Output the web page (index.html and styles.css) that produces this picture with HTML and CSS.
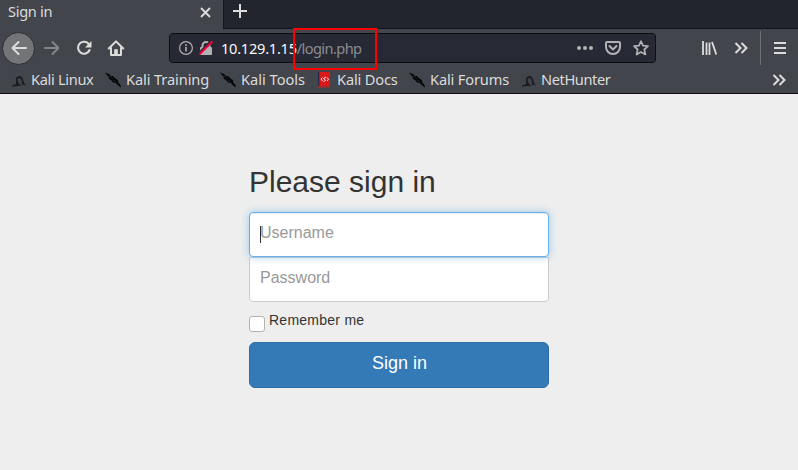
FILE: index.html
```html
<!DOCTYPE html>
<html lang="en">
<head>
<meta charset="utf-8">
<title>Sign in</title>
<link rel="stylesheet" href="styles.css">
</head>
<body>
<svg class="defs" width="0" height="0" aria-hidden="true">
  <symbol id="dragon" viewBox="0 0 16 16"><path d="M2 13.500 6 12C6.500 9 5 7 7 5C9 3 12 4 13 7L14 11 16 13.500 12 12.500 11.500 8C11 6 8 5.500 7.500 8L9 12 12 13.500 8 14 2 14.500Z" fill="#1b1d20"/></symbol>
  <symbol id="blade" viewBox="0 0 16 16"><path d="M0 0.500 4 2 6 4 8 4 11 7 13 8 13 10 15.500 13 16 15.500 12.500 13 11 11 8 10.500 6 8 4 7 3.500 5Z" fill="#050607"/><path d="M3 4 6 5 8 7M8 8 11 10" stroke="#34373c" stroke-width=".6" fill="none"/></symbol>
  <symbol id="chevrons" viewBox="0 0 14 12"><path d="M1.500 1 6.500 6 1.500 11M7.500 1 12.500 6 7.500 11" fill="none" stroke="currentColor" stroke-width="2"/></symbol>
</svg>
<header class="chrome">
  <div class="tabs">
    <div class="tab"><span>Sign in</span>
      <svg class="close" width="11" height="11" viewBox="0 0 11 11"><path d="m1 1 9 9M10 1 1 10" stroke="currentColor" stroke-width="1.800"/></svg>
    </div>
    <svg class="plus" width="14" height="14" viewBox="0 0 14 14"><path d="M7 0v14M0 7h14" stroke="currentColor" stroke-width="2"/></svg>
  </div>
  <div class="toolbar">
    <div class="back"><svg width="18" height="16" viewBox="0 0 18 16"><path d="M16 8H2.500M8.500 2 2.500 8l6 6" fill="none" stroke="currentColor" stroke-width="2" stroke-linecap="round" stroke-linejoin="round"/></svg></div>
    <svg class="forward" width="18" height="16" viewBox="0 0 18 16"><path d="M2 8H15.500M9.500 2 15.500 8l-6 6" fill="none" stroke="currentColor" stroke-width="2" stroke-linecap="round" stroke-linejoin="round"/></svg>
    <svg class="reload" width="16" height="16" viewBox="0 0 16 16"><path d="M13.200 4.600A6 6 0 1 0 13.600 10" fill="none" stroke="currentColor" stroke-width="2.100" stroke-linecap="round"/><path d="M15.500 1v6.500H9Z" fill="currentColor"/></svg>
    <svg class="home" width="18" height="16" viewBox="0 0 18 16"><path d="M1.800 8.500 9 1.400l7.200 7.100M4 8v7h10V8" fill="none" stroke="currentColor" stroke-width="2" stroke-linecap="round" stroke-linejoin="round"/><path d="M7.200 9.200h3.600V15H7.200Z" fill="currentColor"/></svg>
    <div class="urlbar">
      <svg width="14" height="14" viewBox="0 0 14 14"><circle cx="7" cy="7" r="6.400" fill="none" stroke="currentColor" stroke-width="1.200"/><path d="M7 6v4.500M7 3.200v1.700" stroke="currentColor" stroke-width="1.600"/></svg>
      <svg class="lock" width="16" height="16" viewBox="0 0 16 16"><path d="M4.500 8V5.500a3.500 3.500 0 0 1 7 0V8" fill="none" stroke="currentColor" stroke-width="2"/><rect x="2" y="7" width="12" height="8" rx="1" fill="currentColor"/><path d="M1 13 13.500 .5" stroke="#272934" stroke-width="2"/><path d="M1.500 14.200 14.500 1.200" stroke="#f2003c" stroke-width="2"/></svg>
      <span class="address">10.129.1.15<span class="path">/login.php</span></span>
      <span class="highlight"></span>
      <svg class="dots" width="16" height="4" viewBox="0 0 16 4"><g fill="currentColor"><circle cx="2" cy="2" r="2"/><circle cx="8" cy="2" r="2"/><circle cx="14" cy="2" r="2"/></g></svg>
      <svg class="pocket" width="16" height="14" viewBox="0 0 16 14"><path d="M2 1h12q1 0 1 1v4a7 7 0 0 1-14 0V2q0-1 1-1ZM4.500 5 8 8.500 11.500 5" fill="none" stroke="currentColor" stroke-width="2" stroke-linejoin="round" stroke-linecap="round"/></svg>
      <svg class="star" width="16" height="16" viewBox="0 0 16 16"><path d="m8 1.200 2 4.500 5 .5-3.700 3.300 1.100 5L8 12l-4.400 2.500 1.100-5L1 6.200l5-.5Z" fill="none" stroke="currentColor" stroke-width="1.700" stroke-linejoin="round"/></svg>
    </div>
    <svg class="library" width="16" height="14" viewBox="0 0 16 14"><path d="M2 0v14M5.500 1.500V14M8.500 1.500V14M11 1 15.300 13.500" stroke="currentColor" stroke-width="1.800"/></svg>
    <svg class="more" width="14" height="12"><use href="#chevrons"/></svg>
    <span class="divider"></span>
    <svg class="menu" width="12" height="12" viewBox="0 0 12 12"><path d="M0 1h12M0 6h12M0 11h12" stroke="currentColor" stroke-width="2"/></svg>
  </div>
  <nav class="bookmarks">
    <a class="linux"><svg width="16" height="16"><use href="#dragon"/></svg><span>Kali Linux</span></a>
    <a class="training"><svg width="16" height="16"><use href="#blade"/></svg><span>Kali Training</span></a>
    <a class="tools"><svg width="16" height="16"><use href="#blade"/></svg><span>Kali Tools</span></a>
    <a class="docs"><svg width="16" height="16" viewBox="0 0 16 16"><path d="M2 0h1.500v16H2Z" fill="#202b50"/><path d="M3.500 0H14v14H3.500Z" fill="#dc1717"/><path d="M2 14h12v2H2Z" fill="#8d3034"/><path d="M6.500 5.500 5 7l1.500 2M11 5.500 12.500 7.200 11 9M10 5 7.500 6.500l2 1.500L7.500 10" fill="none" stroke="#fff" stroke-width=".9"/></svg><span>Kali Docs</span></a>
    <a class="forums"><svg width="16" height="16"><use href="#blade"/></svg><span>Kali Forums</span></a>
    <a class="nethunter"><svg width="16" height="16"><use href="#dragon"/></svg><span>NetHunter</span></a>
    <svg class="overflow" width="14" height="12"><use href="#chevrons"/></svg>
  </nav>
</header>
<main>
  <form class="signin">
    <h1>Please sign in</h1>
    <div class="field username"><span class="caret"></span><span>Username</span></div>
    <div class="field password"><span>Password</span></div>
    <label class="remember"><span class="box"></span><span>Remember me</span></label>
    <button type="button"><span>Sign in</span></button>
  </form>
</main>
</body>
</html>
```
FILE: styles.css
```css
* { box-sizing: border-box; }
body { margin: 0; height: 470px; overflow: hidden; background: #eee; font-family: "Liberation Sans", Arial, sans-serif; color: #333; }
svg { display: block; flex: none; }
.defs { position: absolute; }
.chrome { height: 94px; background: #42454c; border-bottom: 1px solid #0c0c0d; color: #dcdcdb; font: 14.6px/20px "Noto Sans", sans-serif; white-space: nowrap; }
.tabs { display: flex; height: 28px; background: #23252e; }
.tab { display: flex; width: 223px; background: #42454c; padding: 1px 12px 0 8px; justify-content: space-between; }
.tab span { letter-spacing: -.3px; }
.close { margin-top: 6px; }
.plus { margin: 4px 0 0 10px; }
.tabs::after { content: ""; position: absolute; left: 223px; right: 0; top: 0; height: 28px; border-left: 1px solid #15161c; border-bottom: 1px solid #15161c; }
.toolbar { display: flex; height: 40px; align-items: center; padding-left: 2px; }
.back { display: flex; align-items: center; justify-content: center; width: 33px; height: 33px; border-radius: 50%; background: #737478; border: 1px solid #2c2d32; }
.forward { margin-left: 8px; color: #85868a; }
.reload { margin-left: 15px; }
.home { margin-left: 15px; }
.urlbar { display: flex; align-items: center; position: relative; width: 487px; height: 30px; margin-left: 44px; padding-left: 9px; background: #272934; border: 1px solid #0d0e12; border-radius: 4px; color: #b2b2b4; }
.lock { margin-left: 5px; }
.address { margin: -1px 0 0 7px; width: 142px; color: #f9f9fa; letter-spacing: -.25px; }
.path { color: #8b8c92; letter-spacing: -.6px; }
.highlight { position: absolute; left: 123px; top: -6px; width: 84px; height: 42px; border: 2px solid #f00; z-index: 2; }
.dots { margin-left: auto; }
.pocket { margin-left: 12px; }
.star { margin: 0 6px 0 12px; }
.library { margin-left: 45px; }
.more { margin-left: 17px; }
.divider { width: 1px; height: 34px; margin-left: 12px; background: #6d6f74; }
.menu { margin-left: 13px; }
.bookmarks { display: flex; align-items: center; height: 24px; padding-left: 10px; }
.bookmarks a { display: flex; align-items: center; gap: 5px; }
.bookmarks span { margin-top: -2px; }
.bookmarks .linux { width: 95px; letter-spacing: -.32px; }
.bookmarks .training { width: 115px; letter-spacing: -.1px; }
.bookmarks .tools { width: 96px; }
.bookmarks .docs { width: 93px; letter-spacing: -.15px; }
.bookmarks .forums { width: 111px; letter-spacing: -.15px; }
.bookmarks .nethunter { letter-spacing: -.4px; }
.overflow { margin: 0 12px 0 auto; }
.signin { width: 300px; margin: 71px 0 0 249px; }
h1 { margin: 0; height: 47px; font-size: 30px; line-height: 33px; font-weight: 500; }
.field { display: flex; position: relative; height: 45px; padding: 9px 10px; border: 1px solid #ccc; background: #fff; font-size: 16px; line-height: 22px; color: #999; }
.username { border-color: #66afe9; border-radius: 4px; box-shadow: inset 0 1px 1px #00000013, 0 0 8px #66afe999; z-index: 1; }
.password { border-radius: 0 0 4px 4px; }
.caret { position: absolute; left: 10px; top: 13px; width: 1px; height: 17px; background: #333; }
.remember { display: flex; height: 40px; padding-top: 8px; gap: 4px; font-size: 14px; line-height: 20px; letter-spacing: .25px; }
.box { width: 16px; height: 16px; margin-top: 6px; border: 1px solid #b6b1ac; border-radius: 3px; background: #fff; }
button { display: block; width: 300px; height: 46px; padding: 0 0 4px 1px; border: 1px solid #2e6da4; border-radius: 6px; background: #337ab7; color: #fff; font: 18px "Liberation Sans", sans-serif; }
```
